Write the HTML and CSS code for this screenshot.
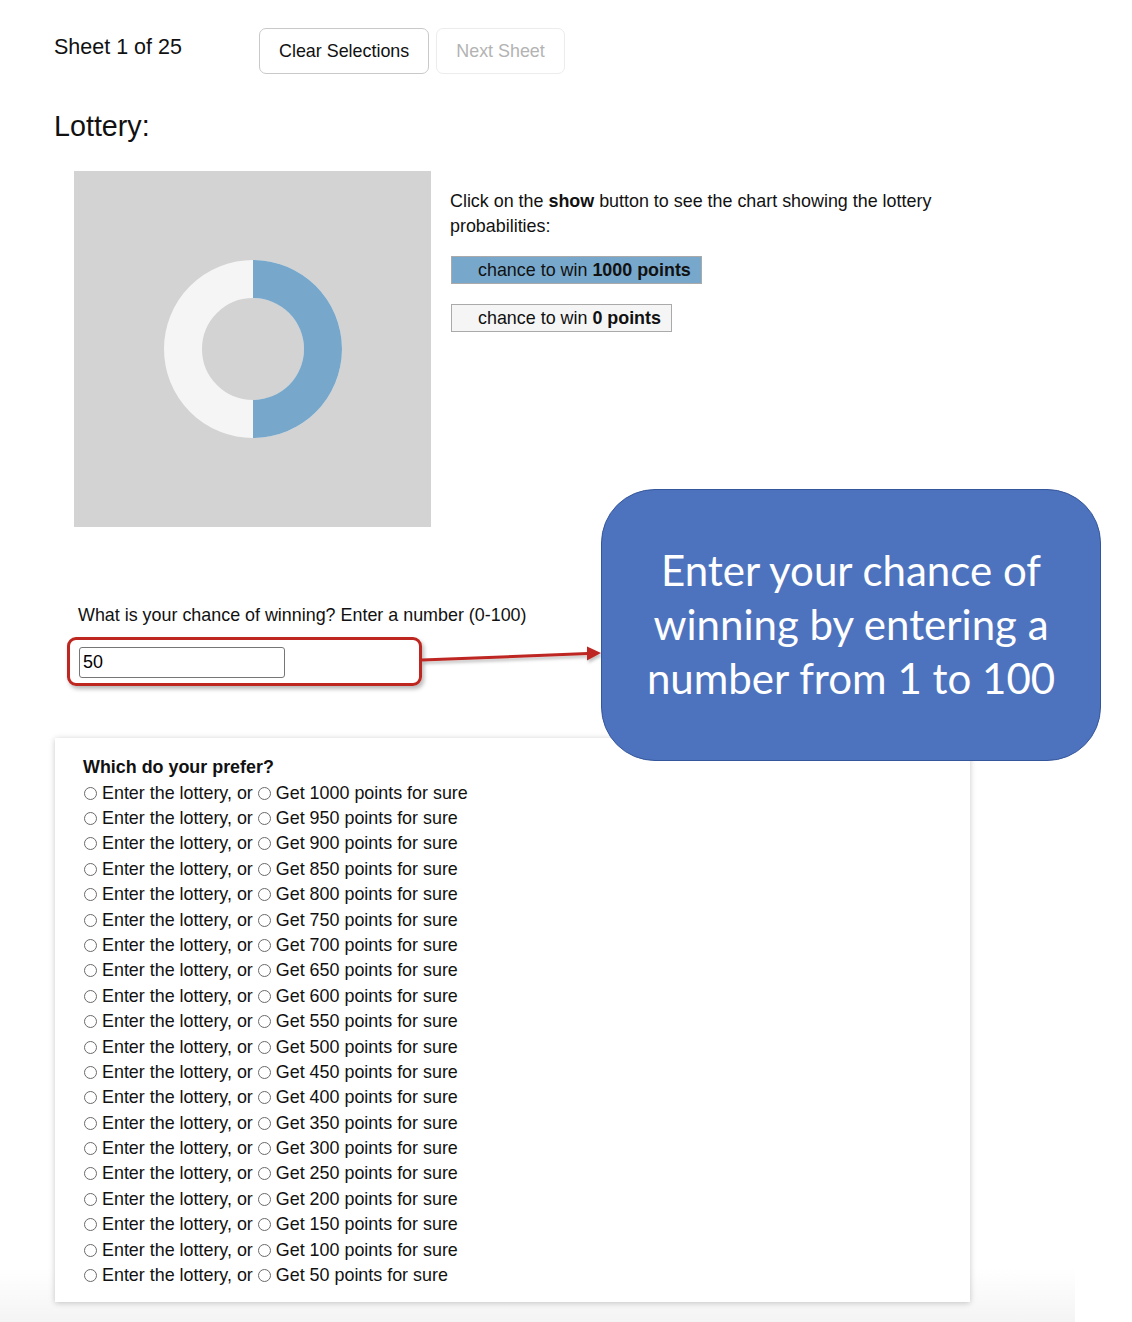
FILE: index.html
```html
<!DOCTYPE html>
<html lang="en">
<head>
<meta charset="utf-8">
<title>Lottery Sheet</title>
<link rel="stylesheet" href="styles.css">
</head>
<body>
<div class="page">
  <header class="topbar">
    <div class="sheet-count">Sheet 1 of 25</div>
    <div class="actions">
      <button class="btn">Clear Selections</button>
      <button class="btn btn-disabled" disabled>Next Sheet</button>
    </div>
  </header>

  <h2 class="title">Lottery:</h2>

  <section class="lottery">
    <div class="chart">
      <svg width="180" height="180" viewBox="0 0 180 180">
        <circle cx="90" cy="90" r="70" fill="none" stroke="#f5f5f5" stroke-width="38"/>
        <path d="M90 1 A89 89 0 0 1 90 179 L90 141 A51 51 0 0 0 90 39 Z" fill="#77a8cc"/>
      </svg>
    </div>
    <div class="info">
      <p class="info-text">Click on the <b>show</b> button to see the chart showing the lottery probabilities:</p>
      <div class="legend legend-win">chance to win <b>1000 points</b></div>
      <div class="legend legend-lose">chance to win <b>0 points</b></div>
    </div>
  </section>

  <section class="question">
    <label class="q-label" for="chance">What is your chance of winning? Enter a number (0-100)</label>
    <div class="input-wrap">
      <input id="chance" class="q-input" type="text" value="50">
      <div class="highlight"></div>
    </div>
  </section>

  <section class="card">
    <div class="card-title">Which do your prefer?</div>
    <div class="rows" id="rows"></div>
  </section>

  <svg class="arrow" width="200" height="30" viewBox="0 0 200 30">
    <defs>
      <filter id="sh" x="-10%" y="-50%" width="120%" height="200%">
        <feDropShadow dx="1.5" dy="2.5" stdDeviation="1.5" flood-color="#000" flood-opacity="0.25"/>
      </filter>
    </defs>
    <g filter="url(#sh)">
      <line x1="0" y1="19" x2="166" y2="12.6" stroke="#bd2720" stroke-width="3"/>
      <polygon points="165,5.5 179,12 165,19.5" fill="#bd2720"/>
    </g>
  </svg>

  <div class="callout">Enter your chance of winning by entering a number from 1 to 100</div>
</div>
<script>
  (function () {
    var rows = document.getElementById('rows');
    var html = '';
    for (var v = 1000, i = 0; v >= 50; v -= 50, i++) {
      html += '<div class="row"><input type="radio" class="radio" name="r' + i + '"><span>Enter the lottery, or</span>' +
              '<input type="radio" class="radio radio-2" name="r' + i + '"><span>Get ' + v + ' points for sure</span></div>';
    }
    rows.innerHTML = html;
  })();
</script>
</body>
</html>
```

FILE: styles.css
```css
* { box-sizing: border-box; }

html, body {
  margin: 0;
  padding: 0;
  background: #fff;
}

body {
  font-family: "Liberation Sans", Arial, sans-serif;
  color: #111;
  font-size: 17.9px;
}

.page {
  position: relative;
  width: 1075px;
  min-height: 1322px;
  padding-bottom: 20px;
  background: linear-gradient(to bottom, #fff 0, #fff 1268px, #f4f4f4 1322px);
}

.topbar {
  display: flex;
  align-items: flex-start;
  padding: 28px 0 0 54px;
}

.sheet-count {
  width: 205px;
  font-size: 21.5px;
  line-height: 24px;
  padding-top: 7px;
  color: #111;
}

.actions {
  display: flex;
  gap: 7px;
}

.btn {
  font-family: "Liberation Sans", Arial, sans-serif;
  font-size: 17.9px;
  height: 46px;
  padding: 0 19px;
  background: #fff;
  color: #111;
  border: 1.5px solid #c9c9c9;
  border-radius: 7px;
}

.btn-disabled {
  color: #b3b3b3;
  border-color: #ececec;
  padding: 0 19px;
}

.title {
  margin: 36px 0 0 54px;
  font-size: 28.7px;
  line-height: 32px;
  font-weight: normal;
  color: #111;
}

.lottery {
  display: flex;
  margin: 29px 0 0 74px;
}

.chart {
  width: 357px;
  height: 356px;
  background: #d3d3d3;
  display: flex;
  align-items: center;
  justify-content: center;
}

.info {
  margin-left: 19px;
  padding-top: 18px;
  width: 520px;
}

.info-text {
  margin: 0;
  line-height: 25px;
  width: 500px;
}

.legend {
  margin-top: 17px;
  margin-left: 1px;
  height: 28px;
  line-height: 26px;
  padding: 0 10px 0 26px;
  border: 1px solid #aaa;
  display: block;
  width: fit-content;
}

.legend-win {
  background: #77a8cc;
}

.legend-lose {
  background: #f5f5f5;
  margin-top: 20px;
}

.question {
  margin: 78px 0 0 78px;
}

.q-label {
  display: block;
  line-height: 20px;
}

.input-wrap {
  position: relative;
  margin-top: 22px;
  margin-left: 1px;
  width: 206px;
}

.q-input {
  display: block;
  width: 206px;
  height: 31px;
  font-family: "Liberation Sans", Arial, sans-serif;
  font-size: 17.9px;
  padding: 2px 3px;
  border: 1px solid #767676;
  border-radius: 3px;
  color: #000;
  background: #fff;
}

.highlight {
  position: absolute;
  left: -12px;
  top: -10px;
  width: 355px;
  height: 49px;
  border: 3px solid #bd2720;
  border-radius: 9px;
  box-shadow: 2px 3px 4px rgba(0, 0, 0, 0.28);
  pointer-events: none;
}

.card {
  margin: 60px 0 0 55px;
  width: 915px;
  padding: 16px 28px 14px 28px;
  background: #fff;
  box-shadow: 0 1px 6px rgba(0, 0, 0, 0.22);
}

.card-title {
  font-weight: bold;
  line-height: 25.4px;
  padding-top: 1px;
}

.row {
  display: flex;
  align-items: center;
  height: 25.4px;
  white-space: nowrap;
}

.radio {
  appearance: none;
  -webkit-appearance: none;
  width: 13px;
  height: 13px;
  margin: 0 5px 0 1px;
  border: 1px solid #6a6a6a;
  border-radius: 50%;
  background: #fff;
  flex: none;
}

.radio-2 {
  margin-left: 5px;
}

.arrow {
  position: absolute;
  left: 422px;
  top: 641px;
  overflow: visible;
}

.callout {
  position: absolute;
  left: 601px;
  top: 489px;
  width: 500px;
  height: 272px;
  background: #4e73be;
  border: 1.5px solid #34569a;
  border-radius: 54px;
  color: #fff;
  font-family: Lato, "Open Sans", sans-serif;
  font-size: 42px;
  line-height: 54px;
  text-align: center;
  display: flex;
  align-items: center;
  justify-content: center;
  padding: 0 40px 2px;
  z-index: 2;
}
```
